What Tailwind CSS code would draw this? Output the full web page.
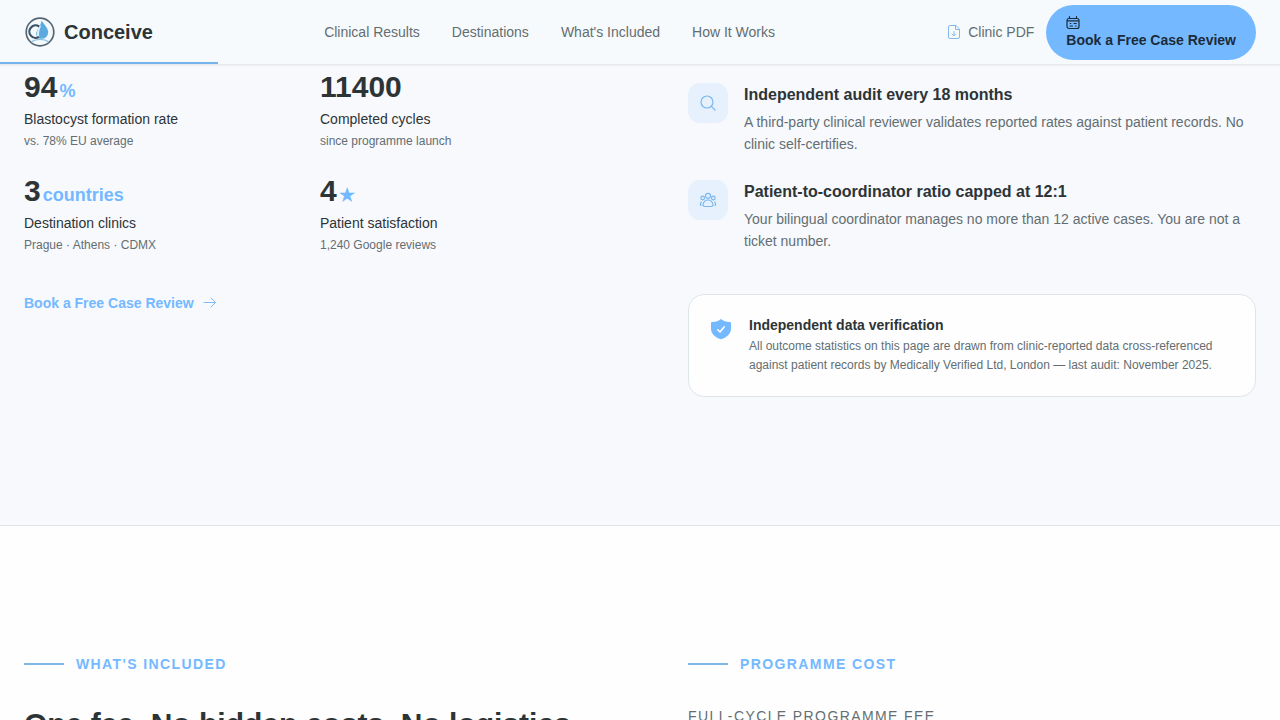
<!DOCTYPE html>
<html lang="en">

<head>
    <meta charset="utf-8">
    <meta name="viewport" content="width=device-width, initial-scale=1">
    <title>Conceive</title>
    <script src="https://cdn.jsdelivr.net/npm/@tailwindcss/browser@4"></script>
</head>

<body class="bg-[#fefefe] font-['Liberation_Sans',Arial,sans-serif] text-sm text-[#2d3436]">
    <header class="sticky top-0 z-10 border-b border-[#e6eaee] bg-[#f7fafc] shadow-xs">
        <div class="flex h-16 items-center justify-between px-6">
            <a href="#" class="flex items-center gap-2 text-xl font-bold">
                <svg class="size-8" viewBox="0 0 32 32" fill="none">
                    <circle cx="16" cy="16" r="13.8" fill="#f4f9fc" stroke="#566675" stroke-width="1.7"/>
                    <path d="M17.500 4.800c3.200 4.400 6.700 7.600 6.700 11.500a6.600 6.600 0 0 1-6.700 6.500c-3.200 0-5-1.800-5.300-4.500 0-4.500 4.600-7.500 5.300-13.500z" fill="#5ba9de"/>
                    <path d="M16.200 9.500c-1.700 3.500-3.200 7-1.700 12.300" stroke="#dceefa" stroke-width="2"/>
                    <path d="M15.200 10.600a6.200 6.200 0 1 0-.2 10.200" stroke="#3d5468" stroke-width="2.200"/>
                    <path d="M7 26c5-3.400 13-3.400 18 0" stroke="#8abde0" stroke-width="1.300"/>
                </svg>
                Conceive
            </a>
            <nav class="flex gap-8 text-[#636e72]">
                <a href="#results">Clinical Results</a>
                <a href="#destinations">Destinations</a>
                <a href="#included">What's Included</a>
                <a href="#how">How It Works</a>
            </nav>
            <div class="flex items-center gap-3">
                <a href="#pdf" class="flex items-center gap-1.5 text-[#636e72]">
                    <svg class="size-4" viewBox="0 0 16 16" fill="none" stroke="#85b9ee" stroke-linecap="round" stroke-linejoin="round">
                        <path d="M9.500 1.500H4a1.500 1.500 0 0 0-1.500 1.500v10A1.500 1.500 0 0 0 4 14.500h8a1.500 1.500 0 0 0 1.500-1.500V5.500zM9.500 1.500v4h4M8 7.500v4M6.200 10 8 11.800 9.800 10"/>
                    </svg>
                    Clinic PDF
                </a>
                <a href="#book" class="rounded-full bg-[#74b9ff] px-5 py-2.5 font-bold text-[#1c2b3a]">
                    <svg class="h-[15px] w-[14px]" viewBox="0 0 14 15" fill="none" stroke="#1c2b3a" stroke-width="1.200" stroke-linecap="round" stroke-linejoin="round">
                        <rect x="1" y="3.500" width="12" height="10" rx="2"/>
                        <path d="M3.500 1.500v2M10.500 1.500v2M1.500 5.800h11M8 8.500h2.200M4.200 8.500h.6M4 11h2.500M9.500 11h.6"/>
                    </svg>
                    Book a Free Case Review
                </a>
            </div>
        </div>
        <!-- scroll progress -->
        <div class="absolute bottom-0 left-0 h-0.5 w-[17%] bg-[#74b4ea]"></div>
    </header>

    <main>
        <section id="results" class="grid grid-cols-2 gap-24 border-b border-[#dfe6e9] bg-[#f7f9fd] px-6 pb-32">
            <div class="pt-1">
                <dl class="grid grid-cols-2 gap-6">
                    <div class="flex flex-col gap-1">
                        <dd class="flex items-baseline gap-0.5 text-3xl font-bold">94<span class="text-lg text-[#74b9ff]">%</span></dd>
                        <dt>Blastocyst formation rate</dt>
                        <dd class="text-xs text-[#636e72]">vs. 78% EU average</dd>
                    </div>
                    <div class="flex flex-col gap-1">
                        <dd class="text-3xl font-bold">11400</dd>
                        <dt>Completed cycles</dt>
                        <dd class="text-xs text-[#636e72]">since programme launch</dd>
                    </div>
                    <div class="flex flex-col gap-1">
                        <dd class="flex items-baseline gap-0.5 text-3xl font-bold">3<span class="text-lg text-[#74b9ff]">countries</span></dd>
                        <dt>Destination clinics</dt>
                        <dd class="text-xs text-[#636e72]">Prague · Athens · CDMX</dd>
                    </div>
                    <div class="flex flex-col gap-1">
                        <dd class="flex items-baseline gap-0.5 text-3xl font-bold">4<span class="text-lg text-[#74b9ff]">★</span></dd>
                        <dt>Patient satisfaction</dt>
                        <dd class="text-xs text-[#636e72]">1,240 Google reviews</dd>
                    </div>
                </dl>
                <a href="#book" class="mt-10 inline-flex items-center gap-2 font-bold text-[#74b9ff]">
                    Book a Free Case Review
                    <svg class="size-4" viewBox="0 0 16 16" fill="none" stroke="#80bbf5" stroke-linecap="round" stroke-linejoin="round">
                        <path d="M2 7.500h11.500M9 3l4.500 4.500L9 12"/>
                    </svg>
                </a>
            </div>

            <div class="pt-[18px]">
                <ul class="flex flex-col gap-[25px]">
                    <li class="flex gap-4">
                        <span class="flex size-10 shrink-0 items-center justify-center rounded-xl bg-[#e6f1fd]">
                            <svg class="size-5" viewBox="0 0 20 20" fill="none" stroke="#7ab8ef" stroke-width="1.200" stroke-linecap="round">
                                <circle cx="9" cy="9" r="6"/>
                                <path d="m13.400 13.400 3.600 3.600"/>
                            </svg>
                        </span>
                        <div>
                            <h3 class="text-base font-bold">Independent audit every 18 months</h3>
                            <p class="mt-1 leading-[22px] text-[#636e72]">A third-party clinical reviewer validates reported rates against patient records. No clinic self-certifies.</p>
                        </div>
                    </li>
                    <li class="flex gap-4">
                        <span class="flex size-10 shrink-0 items-center justify-center rounded-xl bg-[#e6f1fd]">
                            <svg class="size-5" viewBox="0 0 20 20" fill="none" stroke="#7ab8ef" stroke-width="1.200" stroke-linejoin="round">
                                <circle cx="10" cy="5.800" r="2.500"/>
                                <circle cx="4.700" cy="8" r="1.800"/>
                                <circle cx="15.300" cy="8" r="1.800"/>
                                <path d="M5 14.300c.6-2.600 2.500-4.300 5-4.300s4.400 1.700 5 4.300c.3 1.400-.5 2.200-1.800 2.200H6.800c-1.300 0-2.100-.8-1.800-2.200z"/>
                                <path d="M3.800 11.800c-1 .5-1.500 1.300-1.500 2.400 0 .8.500 1.300 1.200 1.300M16.200 11.800c1 .5 1.500 1.300 1.500 2.400 0 .8-.5 1.300-1.200 1.300"/>
                            </svg>
                        </span>
                        <div>
                            <h3 class="text-base font-bold">Patient-to-coordinator ratio capped at 12:1</h3>
                            <p class="mt-1 leading-[22px] text-[#636e72]">Your bilingual coordinator manages no more than 12 active cases. You are not a ticket number.</p>
                        </div>
                    </li>
                </ul>

                <div class="mt-[42px] flex gap-4 rounded-2xl border border-[#dfe6e9] bg-[#fefefe] p-5 pb-[21px]">
                    <svg class="mt-0.5 size-6 shrink-0" viewBox="0 0 24 24">
                        <path d="M12 2c2.200 2 5 2.900 8.600 3 .8 0 1.400.5 1.400 1.300V11.500c0 5-3.500 8.900-10 10.700C5.500 20.400 2 16.500 2 11.500V6.300C2 5.500 2.600 5 3.400 5 7 4.900 9.800 4 12 2z" fill="#74b9ff"/>
                        <path d="m8.800 12.800 2.200 2.200 4.200-5.200" fill="none" stroke="#fff" stroke-width="1.600" stroke-linecap="round" stroke-linejoin="round"/>
                    </svg>
                    <div>
                        <h3 class="font-bold">Independent data verification</h3>
                        <p class="mt-0.5 text-xs leading-[19px] text-[#636e72]">All outcome statistics on this page are drawn from clinic-reported data cross-referenced against patient records by Medically Verified Ltd, London — last audit: November 2025.</p>
                    </div>
                </div>
            </div>
        </section>

        <section id="included" class="grid grid-cols-2 gap-24 px-6 pt-32">
            <div>
                <p class="flex items-center gap-3 font-bold tracking-widest text-[#74b9ff] uppercase"><span class="h-0.5 w-10 bg-[#7fb8e6]"></span>What's Included</p>
                <h2 class="mt-8 text-3xl font-bold">One fee. No hidden costs. No logistics.</h2>
            </div>
            <div>
                <p class="flex items-center gap-3 font-bold tracking-widest text-[#74b9ff] uppercase"><span class="h-0.5 w-10 bg-[#7fb8e6]"></span>Programme Cost</p>
                <p class="mt-8 tracking-widest text-[#636e72] uppercase">Full-cycle programme fee</p>
            </div>
        </section>
    </main>
</body>

</html>
